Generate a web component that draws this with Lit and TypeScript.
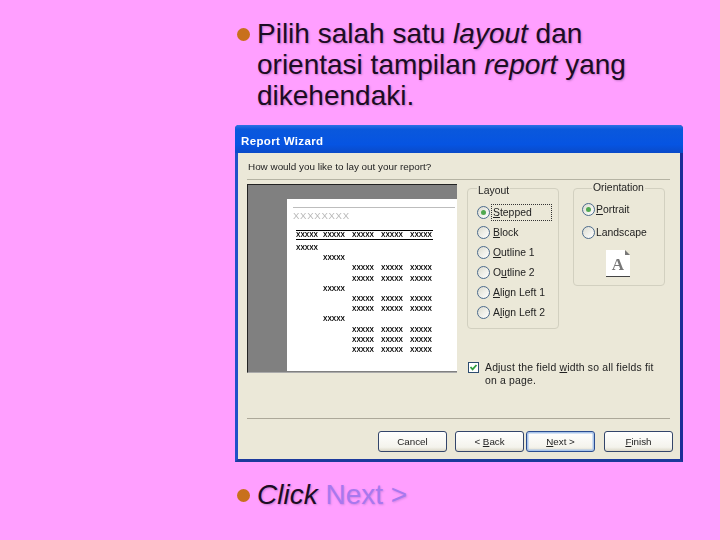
import { LitElement, html, css } from "lit";
import { customElement } from "lit/decorators.js";

const previewRows: number[][] = [
  [0], [1], [2, 3, 4], [2, 3, 4], [1], [2, 3, 4], [2, 3, 4], [1], [2, 3, 4], [2, 3, 4], [2, 3, 4],
];

@customElement("app-root")
export class AppRoot extends LitElement {
  static styles = css`
    :host { display: block; width: 720px; height: 540px; background: #ff9fff; overflow: hidden;
      font-family: "Liberation Sans", Arial, sans-serif; }
    .slide { padding: 18px 37px 0 235px; display: flex; flex-direction: column; }
    .bullet { display: grid; grid-template-columns: 22px 380px; font-size: 28px; line-height: 31px;
      color: #1c0c24; text-shadow: 1px 1px 2px rgba(90,50,100,.35); }
    .dot { width: 13px; height: 13px; border-radius: 50%; background: #c8701c; margin: 10px 0 0 2px; }
    .dlg { margin-top: 14px; height: 337px; box-sizing: border-box; width: 448px; background: #ebe8d8;
      border-left: 3px solid #1f50c8; border-right: 3px solid #1c2c98; border-bottom: 3px solid #1c3a9c;
      border-radius: 4px 4px 0 0; display: flex; flex-direction: column; color: #222;
      font-size: 10.4px; line-height: 13px; filter: blur(.3px); }
    .title { margin: 0 -3px; height: 28px; flex: none; box-sizing: border-box; padding: 10px 0 0 6px;
      background: linear-gradient(#2c72e4 0, #0a58dc 15%, #0654e2 70%, #0a4ac8 100%);
      border-radius: 4px 4px 0 0; color: #fff; font-weight: bold; font-size: 11.5px; line-height: 13px; letter-spacing: .35px; }
    .q { padding: 7px 0 0 10px; height: 19px; font-size: 9.9px; line-height: 13px; flex: none; }
    .rule { margin: 0 10px 0 9px; height: 0; border-top: 1px solid #b5b3a3; }
    .main { display: flex; padding-left: 9px; flex: none; height: 238px; }
    .preview { width: 210px; height: 189px; box-sizing: border-box; margin-top: 4px; background: #808080;
      border-top: 1px solid #222; border-left: 1px solid #222; border-bottom: 1px solid #aaa;
      padding: 14px 0 0 39px; }
    .page { width: 170px; height: 172px; box-sizing: border-box; background: #fff; padding: 8px 2px 0 6px; color: #111; }
    .pline { border-top: 1px solid #bdbdbd; }
    .ptitle { font-size: 9.6px; line-height: 11px; color: #b9b9b9; letter-spacing: .7px; margin: 2px 0 0 0; }
    .phead { display: grid; grid-template-columns: 27px 29px 29px 29px 23px; width: 137px; margin: 9px 0 3px 3px;
      border-top: 1px solid #000; border-bottom: 1px solid #000; font: bold 6.6px/8px "Liberation Sans", sans-serif; color: #000; }
    .prow { display: grid; grid-template-columns: 27px 29px 29px 29px 23px; width: 137px; margin-left: 3px;
      font: bold 6.6px/10.2px "Liberation Sans", sans-serif; color: #000; }
    .right { margin-left: 10px; width: 200px; display: flex; flex-direction: column; }
    .groups { display: flex; gap: 14px; align-items: flex-start; margin-top: 2px; }
    fieldset { margin: 0; padding: 0; border: 1px solid #d2d0c0; border-radius: 4px; box-sizing: border-box; width: 92px; min-inline-size: 0; }
    legend { font-size: 10.4px; line-height: 12px; padding: 0 1px; }
    .g1 { height: 147px; padding: 8px 0 0 9px; }
    .g1 legend { position: relative; top: 3px; }
    .g2 { height: 104px; padding: 4px 0 0 8px; }
    .g2 legend { margin-left: 10px; }
    .r { display: flex; align-items: center; gap: 3px; height: 20px; }
    .radio { width: 11px; height: 11px; flex: none; border-radius: 50%; border: 1px solid #4c6b8c;
      background: linear-gradient(135deg, #dcdcd0, #fff); display: flex; align-items: center; justify-content: center; }
    .radio i { width: 5px; height: 5px; border-radius: 50%; background: #50a850; }
    .sel { outline: 1px dotted #333; padding: 1px 19px 1px 1px; margin-left: -1px; }
    .g2 .r { height: 23px; gap: 1px; }
    .doc { width: 24px; height: 27px; box-sizing: border-box; margin: 6px 0 0 24px; background: #fff;
      border-bottom: 1px solid #444; position: relative; text-align: center;
      font: bold 17px/29px "Liberation Serif", serif; color: #777; }
    .doc::after { content: ""; position: absolute; right: 0; top: 0; border-style: solid; border-width: 0 5px 5px 0;
      border-color: transparent #ebe8d8 #777 transparent; }
    .check { display: grid; grid-template-columns: 11px 1fr; column-gap: 6px; margin: 32px 0 0 1px; letter-spacing: .2px; width: 196px; }
    .box { width: 11px; height: 11px; box-sizing: border-box; border: 1px solid #2c4c70; background: #fff; margin-top: 1px; }
    .box svg { display: block; }
    .sep { margin: 0 10px 0 9px; border-top: 1px solid #aca899; flex: none; }
    .btns { display: flex; padding: 12px 0 0 140px; }
    .btn { width: 69px; height: 21px; box-sizing: border-box; border: 1px solid #33456a; border-radius: 3px;
      background: linear-gradient(#fff, #f4f3ec 80%, #dcd8c8); text-align: center; line-height: 19px; font-size: 9.8px; color: #222; }
    .btn.def { border: 1px solid #2a4c90; box-shadow: inset 0 0 0 1.5px #a8c4ea; }
    .b1 { margin-right: 8px; } .b2 { margin-right: 2px; } .b3 { margin-right: 9px; }
    u { text-decoration-thickness: 1px; text-underline-offset: 1px; }
    .click { margin-top: 17px; }
    .link { color: #a878ee; font-style: normal; text-shadow: 1px 1px 2px rgba(110,70,170,.3); }
  `;

  private radio(label: unknown, on = false, sel = false) {
    return html`<div class="r"><span class="radio">${on ? html`<i></i>` : ""}</span>
      ${sel ? html`<span class="sel">${label}</span>` : html`<span>${label}</span>`}</div>`;
  }

  render() {
    return html`<div class="slide">
      <div class="bullet"><span class="dot"></span><div>Pilih salah satu <em>layout</em> dan orientasi tampilan <em>report</em> yang dikehendaki.</div></div>
      <div class="dlg">
        <div class="title">Report Wizard</div>
        <div class="q">How would you like to lay out your report?</div>
        <div class="rule"></div>
        <div class="main">
          <div class="preview"><div class="page">
            <div class="pline"></div>
            <div class="ptitle">XXXXXXXX</div>
            <div class="phead">${[0, 1, 2, 3, 4].map(() => html`<span>XXXXX</span>`)}</div>
            ${previewRows.map(cols => html`<div class="prow">${[0, 1, 2, 3, 4].map(c => html`<span>${cols.includes(c) ? "XXXXX" : ""}</span>`)}</div>`)}
          </div></div>
          <div class="right">
            <div class="groups">
              <fieldset class="g1"><legend>Layout</legend>
                ${this.radio(html`<u>S</u>tepped`, true, true)}
                ${this.radio(html`<u>B</u>lock`)}
                ${this.radio(html`<u>O</u>utline 1`)}
                ${this.radio(html`O<u>u</u>tline 2`)}
                ${this.radio(html`<u>A</u>lign Left 1`)}
                ${this.radio(html`A<u>l</u>ign Left 2`)}
              </fieldset>
              <fieldset class="g2"><legend>Orientation</legend>
                ${this.radio(html`<u>P</u>ortrait`, true)}
                ${this.radio(html`Landscape`)}
                <div class="doc">A</div>
              </fieldset>
            </div>
            <div class="check"><span class="box"><svg width="9" height="9" viewBox="0 0 9 9"><path d="M1.5 4 L3.6 6.4 L7.5 2" fill="none" stroke="#2f9e3f" stroke-width="1.8"/></svg></span>
              <span>Adjust the field <u>w</u>idth so all fields fit on a page.</span></div>
          </div>
        </div>
        <div class="sep"></div>
        <div class="btns">
          <div class="btn b1">Cancel</div>
          <div class="btn b2">&lt; <u>B</u>ack</div>
          <div class="btn def b3"><u>N</u>ext &gt;</div>
          <div class="btn"><u>F</u>inish</div>
        </div>
      </div>
      <div class="bullet click"><span class="dot"></span><div><em>Click</em> <span class="link">Next &gt;</span></div></div>
    </div>`;
  }
}
